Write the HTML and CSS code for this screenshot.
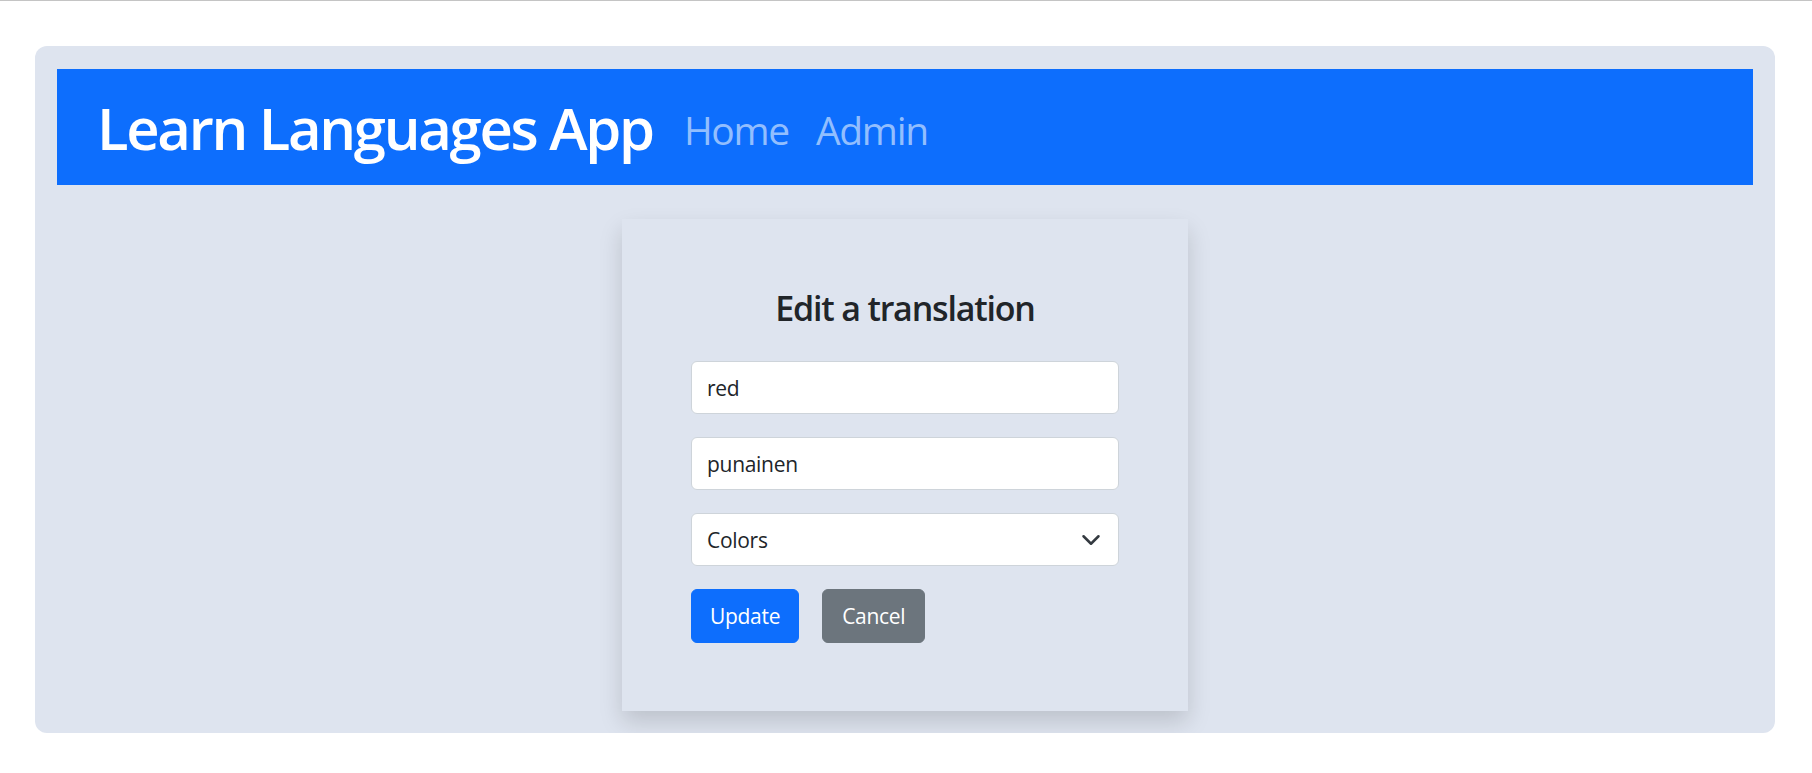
FILE: index.html
```html
<!DOCTYPE html>
<html lang="en">
<head>
<meta charset="utf-8">
<title>Learn Languages App</title>
<link rel="stylesheet" href="styles.css">
</head>
<body>
<div class="app">
  <nav class="navbar">
    <a class="brand" href="#">Learn Languages App</a>
    <div class="nav">
      <a class="nav-link" href="#">Home</a>
      <a class="nav-link" href="#">Admin</a>
    </div>
  </nav>
  <main class="main">
    <form class="card">
      <h3 class="card-title">Edit a translation</h3>
      <input class="field" type="text" value="red">
      <input class="field" type="text" value="punainen">
      <div class="field select">
        <span>Colors</span>
        <svg class="chevron" width="20" height="20" viewBox="0 0 16 16"><path d="M2 5l6 6 6-6" fill="none" stroke="#343a40" stroke-width="2" stroke-linecap="round" stroke-linejoin="round"/></svg>
      </div>
      <div class="actions">
        <button class="btn btn-primary" type="button">Update</button>
        <button class="btn btn-secondary" type="button">Cancel</button>
      </div>
    </form>
  </main>
</div>
</body>
</html>
```
FILE: styles.css
```css
* { box-sizing: border-box; }
html, body { margin: 0; padding: 0; background: #fff; }
body {
  border-top: 1px solid #c4c4c4;
  font-family: "Open Sans", "Noto Sans", "Liberation Sans", sans-serif;
  color: #212529;
}
.app {
  margin: 45px 37px 0 35px;
  background: #dee4ef;
  border-radius: 12px;
  padding: 23px 22px 22px;
}
.navbar {
  background: #0d6efd;
  height: 116px;
  display: flex;
  align-items: center;
  padding-left: 40px;
}
.brand {
  color: #fff;
  text-decoration: none;
  font-size: 58px;
  font-weight: 600;
  line-height: 1.2;
  letter-spacing: -2.3px;
  margin-top: 2px;
}
.nav {
  display: flex;
  gap: 27px;
  margin-left: 31px;
  margin-top: 6px;
}
.nav-link {
  color: #92befe;
  text-decoration: none;
  font-size: 39px;
  line-height: 1.2;
  letter-spacing: -1.3px;
}
.main {
  display: flex;
  justify-content: center;
  padding-top: 34px;
}
.card {
  width: 566px;
  margin: 0;
  padding: 69px 69px 68px;
  background: #dee4ef;
  box-shadow: 0 11px 22px rgba(0, 0, 0, 0.15);
  display: flex;
  flex-direction: column;
}
.card-title {
  margin: 0 0 32.5px;
  text-align: center;
  font-size: 34px;
  font-weight: 600;
  line-height: 1.2;
  letter-spacing: -1.2px;
  color: #212529;
}
.field {
  display: block;
  width: 100%;
  height: 52.5px;
  margin: 0 0 23.5px;
  padding: 0 15px;
  border: 1px solid #ced4da;
  border-radius: 6px;
  background: #fff;
  font-family: inherit;
  font-size: 21px;
  letter-spacing: -0.3px;
  color: #212529;
  outline: none;
}
.select {
  display: flex;
  align-items: center;
  justify-content: space-between;
  padding-right: 17px;
}
.chevron { display: block; }
.actions {
  display: flex;
  gap: 23px;
}
.btn {
  height: 53.5px;
  padding: 0 18px;
  border: 1px solid transparent;
  border-radius: 6px;
  font-family: inherit;
  font-size: 21px;
  letter-spacing: -0.3px;
  color: #fff;
  cursor: pointer;
}
.btn-secondary { padding: 0 19px; }
.btn-primary { background: #0d6efd; border-color: #0d6efd; }
.btn-secondary { background: #6c757d; border-color: #6c757d; }
```
